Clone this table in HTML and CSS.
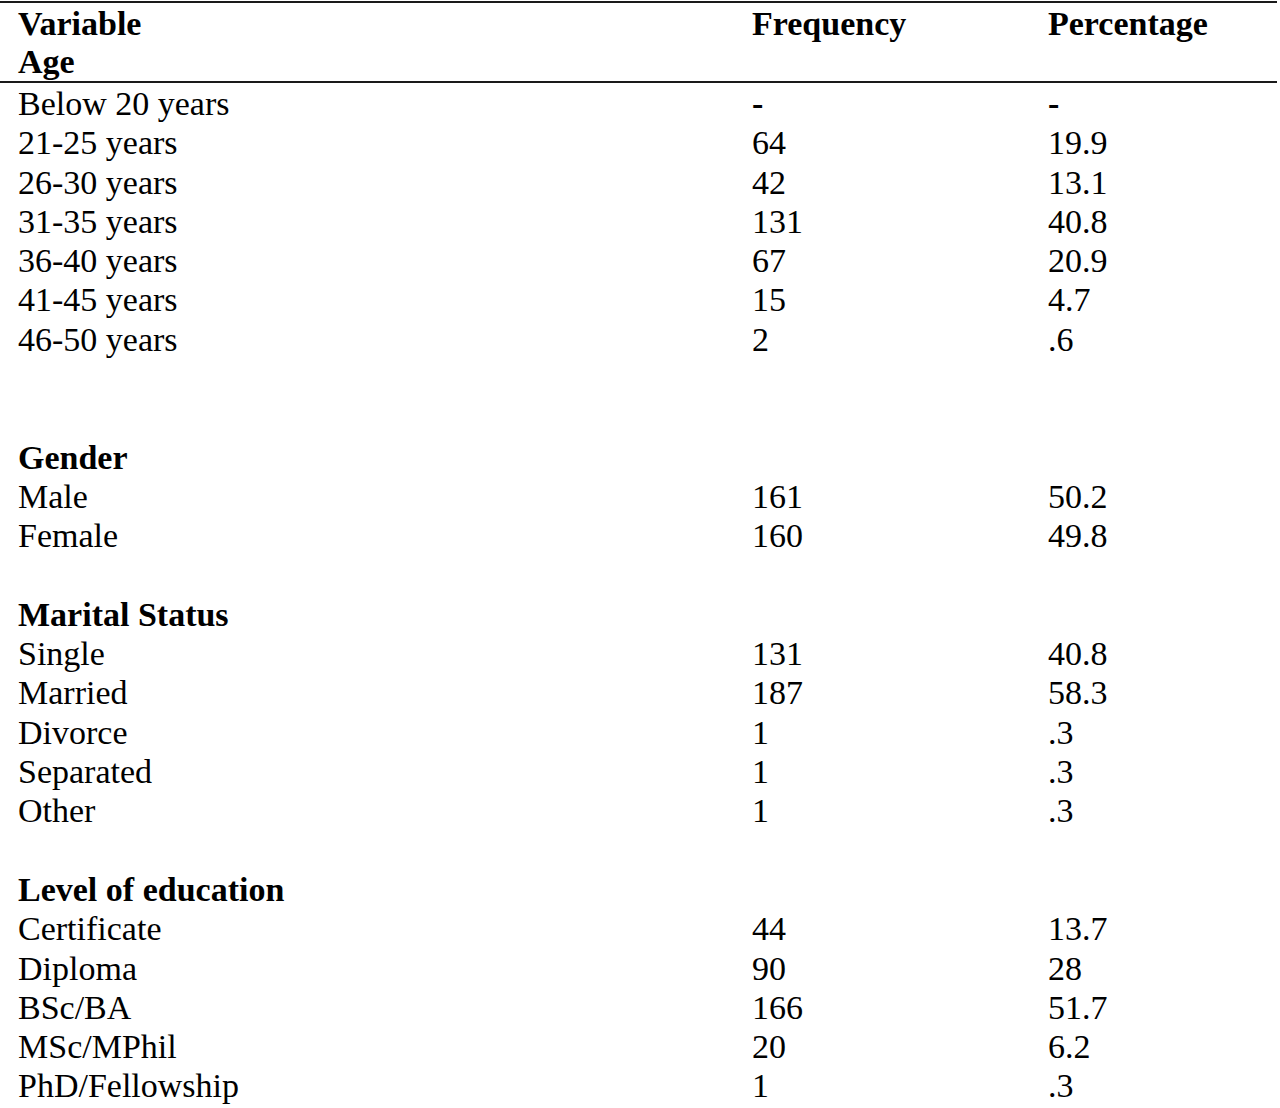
FILE: index.html
```html
<!DOCTYPE html>
<html lang="en">
<head>
    <meta charset="UTF-8">
    <meta name="viewport" content="width=device-width, initial-scale=1.0">
    <title>Demographic Characteristics</title>
    <link rel="stylesheet" href="styles.css">
</head>
<body>
    <div class="data-table">
        <!-- Header -->
        <div class="table-head">
            <div class="row head-row">
                <span>Variable</span>
                <span>Frequency</span>
                <span>Percentage</span>
            </div>
            <div class="row head-row">
                <span>Age</span>
                <span></span>
                <span></span>
            </div>
        </div>

        <div class="table-body">
            <!-- Age -->
            <div class="row"><span>Below 20 years</span><span class="dash">-</span><span class="dash">-</span></div>
            <div class="row"><span>21-25 years</span><span>64</span><span>19.9</span></div>
            <div class="row"><span>26-30 years</span><span>42</span><span>13.1</span></div>
            <div class="row"><span>31-35 years</span><span>131</span><span>40.8</span></div>
            <div class="row"><span>36-40 years</span><span>67</span><span>20.9</span></div>
            <div class="row"><span>41-45 years</span><span>15</span><span>4.7</span></div>
            <div class="row"><span>46-50 years</span><span>2</span><span>.6</span></div>
            <div class="row blank"></div>
            <div class="row blank"></div>

            <!-- Gender -->
            <div class="row group-title"><span>Gender</span></div>
            <div class="row"><span>Male</span><span>161</span><span>50.2</span></div>
            <div class="row"><span>Female</span><span>160</span><span>49.8</span></div>
            <div class="row blank"></div>

            <!-- Marital status -->
            <div class="row group-title"><span>Marital Status</span></div>
            <div class="row"><span>Single</span><span>131</span><span>40.8</span></div>
            <div class="row"><span>Married</span><span>187</span><span>58.3</span></div>
            <div class="row"><span>Divorce</span><span>1</span><span>.3</span></div>
            <div class="row"><span>Separated</span><span>1</span><span>.3</span></div>
            <div class="row"><span>Other</span><span>1</span><span>.3</span></div>
            <div class="row blank"></div>

            <!-- Education -->
            <div class="row group-title"><span>Level of education</span></div>
            <div class="row"><span>Certificate</span><span>44</span><span>13.7</span></div>
            <div class="row"><span>Diploma</span><span>90</span><span>28</span></div>
            <div class="row"><span>BSc/BA</span><span>166</span><span>51.7</span></div>
            <div class="row"><span>MSc/MPhil</span><span>20</span><span>6.2</span></div>
            <div class="row"><span>PhD/Fellowship</span><span>1</span><span>.3</span></div>
        </div>
    </div>
</body>
</html>
```

FILE: styles.css
```css
body {
    margin: 0;
    background: #fff;
    color: #000;
    font-family: "Liberation Serif", "Times New Roman", serif;
    font-size: 34px;
}

.data-table {
    width: 1277px;
    margin-top: 1px;
}

.table-head {
    border-top: 2px solid #1a1a1a;
    border-bottom: 2px solid #1a1a1a;
    padding-top: 2px;
}

.row {
    display: grid;
    grid-template-columns: 734px 296px 1fr;
    padding-left: 18px;
    line-height: 39.3px;
    min-height: 39.3px;
}

.head-row {
    font-weight: bold;
    line-height: 38px;
    min-height: 38px;
}

.table-body {
    padding-top: 1px;
}

.group-title {
    font-weight: bold;
}

.dash {
    font-weight: bold;
}
```
